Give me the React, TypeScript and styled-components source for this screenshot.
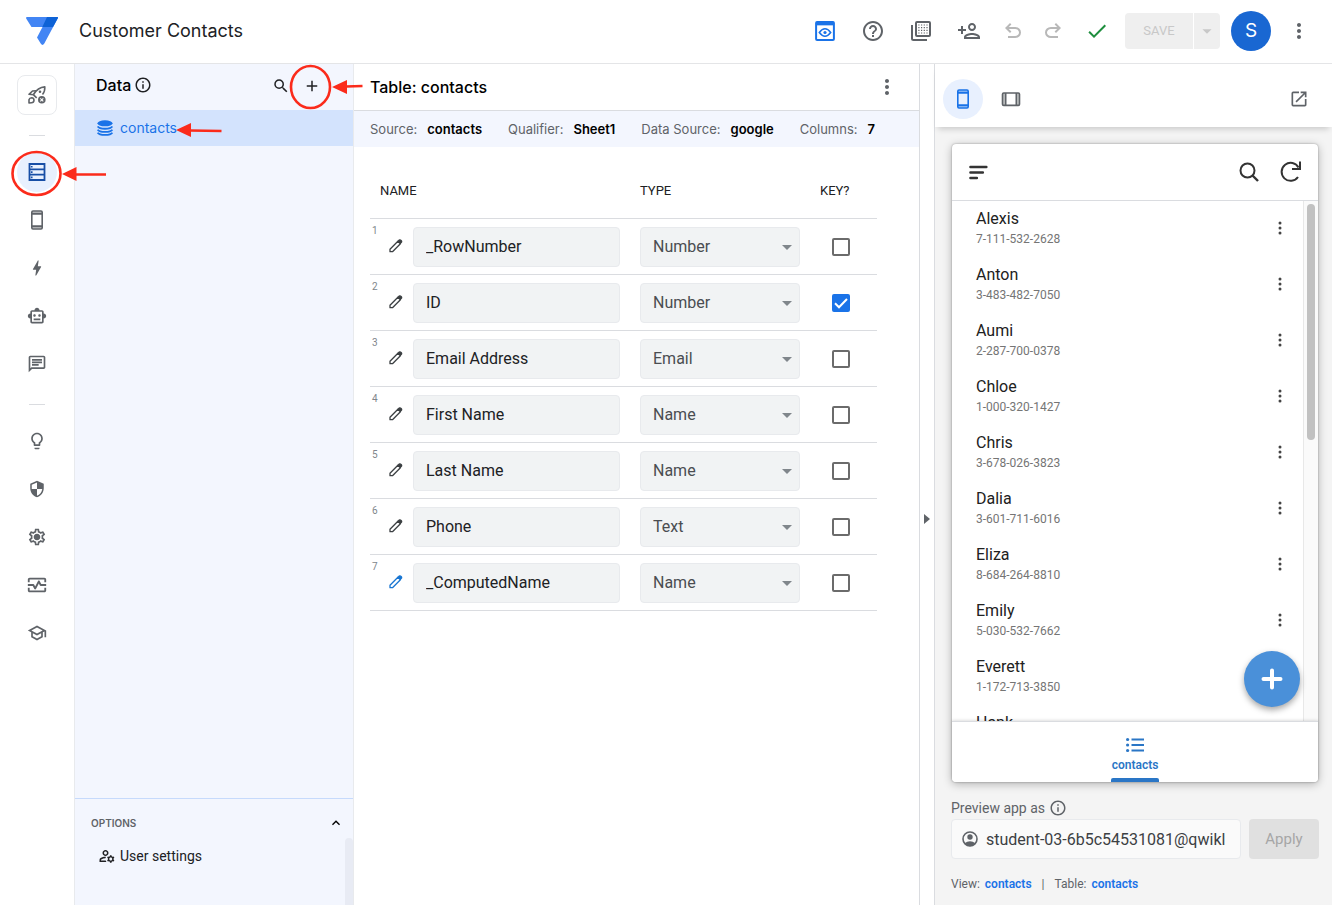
import React from "react";
import styled, { createGlobalStyle } from "styled-components";
import {
  MdHelpOutline, MdOutlinePersonAdd, MdCheck, MdMoreVert, MdBolt,
  MdOutlineSmartToy, MdOutlineChat, MdLightbulbOutline, MdSecurity, MdOutlineSettings,
  MdOutlineMonitorHeart, MdOutlineSchool, MdOutlineInfo, MdSearch, MdAdd, MdOpenInNew,
  MdOutlineManageAccounts, MdExpandLess, MdArrowDropDown,
} from "react-icons/md";

const body = `Roboto, "Liberation Sans", sans-serif`;
const display = `Inter, "Open Sans", sans-serif`;
const grey = "#5f6368";
const line = "#dadce0";
const blue = "#1a73e8";
const pale = "#f3f6fe";

const GlobalStyle = createGlobalStyle`
  *, *::before, *::after { box-sizing: border-box; }
  body { margin: 0; font-family: ${body}; color: #202124; background: #fff; }
  button, input, select { font: inherit; color: inherit; margin: 0; }
  button { background: none; border: 0; padding: 0; cursor: pointer; }
  ul { list-style: none; margin: 0; padding: 0; }
  h1, h2, h3 { margin: 0; font-weight: 500; }
  a { text-decoration: none; }
  svg { display: block; flex: none; }
`;

const Shell = styled.div`
  position: relative;
  display: flex;
  flex-direction: column;
  height: 100vh;
  overflow: hidden;
`;

const TopBar = styled.header`
  display: flex;
  align-items: center;
  height: 64px;
  flex: none;
  padding: 0 21px 2px 26px;
  border-bottom: 1px solid #e4e5e7;
`;
const AppTitle = styled.h1`
  flex: 1;
  margin-left: 21px;
  font: 400 18px/24px ${display};
`;
const Tools = styled.div<{ $gap: number; $after?: number }>`
  display: flex;
  align-items: center;
  gap: ${(p) => p.$gap}px;
  margin-right: ${(p) => p.$after ?? 0}px;
`;
const IconButton = styled.button<{ $size?: number; $color?: string }>`
  display: grid;
  place-items: center;
  width: ${(p) => p.$size ?? 24}px;
  height: ${(p) => p.$size ?? 24}px;
  color: ${(p) => p.$color ?? grey};
  border-radius: 50%;
`;
const SaveGroup = styled.div`
  display: flex;
  gap: 1px;
  height: 36px;
  margin: 0 11px 0 16px;
`;
const SaveButton = styled.button<{ $side: "left" | "right" }>`
  display: grid;
  place-items: center;
  width: ${(p) => (p.$side === "left" ? 68 : 26)}px;
  border-radius: ${(p) => (p.$side === "left" ? "4px 0 0 4px" : "0 4px 4px 0")};
  background: #efefef;
  color: #c8c8c8;
  font-size: 13px;
`;
const Avatar = styled.button`
  width: 40px;
  height: 40px;
  margin-right: 16px;
  border-radius: 50%;
  background: #1967d2;
  color: #fff;
  font: 400 19px/40px ${display};
`;

const Workspace = styled.div`
  display: flex;
  flex: 1;
  min-height: 0;
`;

const Rail = styled.nav`
  display: flex;
  flex-direction: column;
  align-items: center;
  gap: 8px;
  width: 74px;
  flex: none;
  padding-top: 11px;
`;
const RailButton = styled.button<{ $kind?: "boxed" | "active" }>`
  display: grid;
  place-items: center;
  width: 40px;
  height: 40px;
  flex: none;
  color: ${(p) => (p.$kind === "active" ? "#174ea6" : grey)};
  background: ${(p) => (p.$kind === "active" ? "#e8f0fe" : "none")};
  border: ${(p) => (p.$kind === "boxed" ? "1px solid #e8eaed" : "0")};
  border-radius: ${(p) => (p.$kind === "boxed" ? "8px" : "50%")};
`;
const RailRule = styled.hr`
  width: 16px;
  height: 1px;
  flex: none;
  margin: 12px 0 8px;
  border: 0;
  background: ${line};
`;

const DataPanel = styled.aside`
  display: flex;
  flex-direction: column;
  width: 280px;
  flex: none;
  background: ${pale};
  border: solid #e8eaed;
  border-width: 0 1px;
`;
const DataHeader = styled.div`
  display: flex;
  align-items: center;
  height: 46px;
  padding: 0 32px 2px 21px;
`;
const TitleGroup = styled.div`
  display: flex;
  align-items: center;
  gap: 3px;
  padding-bottom: 2px;
`;
const PanelTitle = styled.h2`
  font: 500 16px/24px ${display};
  color: #000;
`;
const HeaderActions = styled.div`
  display: flex;
  gap: 13px;
  margin-left: auto;
`;
const DataItem = styled.a`
  display: flex;
  align-items: center;
  gap: 7px;
  height: 36px;
  padding-left: 22px;
  background: #d3e3fd;
  color: ${blue};
  font: 400 14px/20px ${display};
`;
const Options = styled.section`
  margin-top: auto;
  border-top: 1px solid #c6dafc;
`;
const OptionsHeader = styled.button`
  display: flex;
  align-items: center;
  justify-content: space-between;
  width: 100%;
  padding: 16px 9px 7px 16px;
  font: 600 10px/16px ${display};
  color: ${grey};
`;
const OptionsBody = styled.div`
  display: flex;
  justify-content: space-between;
  height: 67px;
`;
const OptionLink = styled.a`
  display: flex;
  align-items: center;
  gap: 4px;
  height: 36px;
  padding-left: 23px;
  color: #202124;
  font-size: 14px;
`;
const OptionsScroll = styled.div`
  width: 8px;
  border-radius: 4px 4px 0 0;
  background: #e8ebf4;
`;

const Main = styled.main`
  flex: 1;
  min-width: 0;
`;
const MainHeader = styled.div`
  display: flex;
  align-items: center;
  justify-content: space-between;
  height: 47px;
  padding: 0 20px 0 16px;
  border-bottom: 1px solid ${line};
`;
const Facts = styled.dl`
  display: flex;
  gap: 26px;
  height: 36px;
  margin: 0;
  padding-left: 16px;
  align-items: center;
  background: ${pale};
  font: 400 13px/20px ${display};
  white-space: nowrap;
`;
const Fact = styled.div`
  display: flex;
  gap: 10px;
  dt { color: ${grey}; }
  dd { margin: 0; color: #000; font-weight: 600; }
`;
const TableWrap = styled.div`
  padding: 16px 42px 0 16px;
`;
const Table = styled.table`
  width: 100%;
  table-layout: fixed;
  border-collapse: separate;
  border-spacing: 0;
  th, td { height: 56px; padding: 0; border-bottom: 1px solid ${line}; }
  th { text-align: left; font-weight: 400; font-size: 13px; }
  th:first-child { padding-left: 10px; }
`;
const NameCell = styled.div`
  display: grid;
  grid-template-columns: 18px 25px 1fr;
  padding-right: 20px;
  align-items: center;
`;
const RowIndex = styled.span`
  align-self: start;
  padding-left: 2px;
  font-size: 10px;
  line-height: 8px;
  color: #80868b;
`;
const NameInput = styled.input`
  width: 100%;
  height: 40px;
  padding: 0 12px;
  border: 1px solid #e8eaed;
  border-radius: 4px;
  background: #f1f3f4;
  font-size: 16px;
`;
const SelectBox = styled.div`
  position: relative;
  margin-right: 20px;
  color: #80868b;
  svg { position: absolute; right: 1px; top: 8px; pointer-events: none; }
`;
const TypeSelect = styled.select`
  display: block;
  appearance: none;
  width: 100%;
  height: 40px;
  padding: 0 12px;
  border: 1px solid #e8eaed;
  border-radius: 4px;
  background: #f1f3f4;
  color: #4a4d51;
  font-size: 16px;
`;
const KeyBox = styled.label`
  position: relative;
  display: block;
  width: 18px;
  height: 18px;
  margin-left: 12px;
  svg { position: absolute; inset: 0; pointer-events: none; }
`;
const KeyInput = styled.input`
  display: block;
  appearance: none;
  width: 18px;
  height: 18px;
  border: 2px solid #6b6b6b;
  border-radius: 2px;
  &:checked { background: ${blue}; border-color: ${blue}; }
`;

const Splitter = styled.button`
  display: flex;
  align-items: center;
  justify-content: center;
  width: 16px;
  flex: none;
  padding-top: 68px;
  border: solid ${line};
  border-width: 0 1px;
`;

const Preview = styled.aside`
  display: flex;
  flex-direction: column;
  width: 397px;
  flex: none;
  background: #f4f4f4;
`;
const PreviewBar = styled.div`
  display: flex;
  align-items: center;
  gap: 8px;
  padding: 15px 13px 8px 8px;
  background: #fff;
  box-shadow: 0 5px 6px -3px rgba(0, 0, 0, 0.18);
`;
const DeviceButton = styled.button<{ $on?: boolean }>`
  display: grid;
  place-items: center;
  width: 40px;
  height: 40px;
  border-radius: 50%;
  color: ${(p) => (p.$on ? blue : grey)};
  background: ${(p) => (p.$on ? "#e8f0fe" : "none")};
  &:last-child { margin-left: auto; }
`;
const Phone = styled.section`
  display: flex;
  flex-direction: column;
  flex: 1;
  min-height: 0;
  margin: 17px 14px 0 17px;
  border-radius: 4px;
  background: #fff;
  box-shadow: 0 0 2px rgba(0, 0, 0, 0.35), 0 2px 10px rgba(0, 0, 0, 0.28);
`;
const PhoneBar = styled.div`
  display: flex;
  align-items: center;
  gap: 18px;
  height: 57px;
  flex: none;
  padding: 0 15px;
  border-bottom: 1px solid ${line};
  button:first-child { margin-right: auto; }
`;
const PhoneBody = styled.div`
  position: relative;
  display: flex;
  flex: 1;
  min-height: 0;
`;
const ContactList = styled.ul`
  flex: 1;
  overflow: hidden;
`;
const Contact = styled.li`
  display: flex;
  align-items: center;
  justify-content: space-between;
  height: 56px;
  padding: 0 11px 2px 24px;
`;
const ContactText = styled.div`
  padding-bottom: 2px;
`;
const ContactName = styled.div`
  font-size: 16px;
  line-height: 24px;
  color: #212121;
`;
const ContactPhone = styled.div`
  font-size: 12px;
  line-height: 16px;
  color: #757575;
`;
const Track = styled.div`
  width: 15px;
  padding: 3px;
  border-left: 1px solid #e8e8e8;
  background: #fafafa;
`;
const Thumb = styled.div`
  height: 46%;
  border-radius: 4px;
  background: #c1c1c1;
`;
const AddButton = styled.button`
  position: absolute;
  right: 18px;
  bottom: 14px;
  display: grid;
  place-items: center;
  width: 56px;
  height: 56px;
  border-radius: 50%;
  color: #fff;
  background: #4a90d9;
  box-shadow: 0 3px 6px rgba(0, 0, 0, 0.35);
`;
const PhoneNav = styled.nav`
  position: relative;
  display: flex;
  justify-content: center;
  border-top: 1px solid ${line};
  border-radius: 0 0 4px 4px;
  background: #fff;
  box-shadow: 0 -1px 3px rgba(0, 0, 0, 0.12);
`;
const NavTab = styled.a`
  display: flex;
  flex-direction: column;
  align-items: center;
  width: 48px;
  padding-top: 11px;
  color: #2a76c6;
  font-weight: 600;
  font-size: 12px;
  line-height: 16px;
  &::after {
    content: "";
    width: 48px;
    height: 4px;
    margin-top: 5px;
    border-radius: 2px 2px 0 0;
    background: #2a76c6;
  }
`;
const PreviewFooter = styled.footer`
  padding: 16px 13px 12px 16px;
`;
const PreviewLabel = styled.label`
  display: flex;
  align-items: center;
  gap: 4px;
  height: 21px;
  padding-bottom: 1px;
  font-size: 14px;
  color: ${grey};
`;
const ApplyRow = styled.form`
  display: flex;
  gap: 8px;
  height: 40px;
`;
const UserField = styled.div`
  display: flex;
  align-items: center;
  gap: 7px;
  flex: 1;
  min-width: 0;
  padding: 0 12px 0 9px;
  border: 1px solid #e8eaed;
  border-radius: 4px;
  background: #fafafa;
  color: ${grey};
  input {
    flex: 1;
    min-width: 0;
    padding: 0;
    border: 0;
    background: none;
    color: #3c4043;
    font-size: 16px;
  }
`;
const ApplyButton = styled.button`
  width: 70px;
  border-radius: 4px;
  background: #e0e0e0;
  color: #a6a6a6;
  font-size: 15px;
`;
const Links = styled.div`
  display: flex;
  gap: 5px;
  margin-top: 16px;
  font-size: 12px;
  line-height: 18px;
  color: ${grey};
  a { color: ${blue}; font-weight: 600; }
  i { margin: 0 5px; font-style: normal; }
`;

const Annotations = styled.svg`
  position: absolute;
  left: 0;
  top: 0;
  pointer-events: none;
`;

const Logo = () => (
  <svg width="32" height="28" viewBox="0 0 32 28" aria-hidden="true">
    <path d="M1 0h30q1.600 0 .8 1.300L18.300 26.500q-1.800 2.900-3.600 0L11 20.500 16.500 10H5.500L.3 1.800Q-.4 0 1 0z" fill="#4285f4" />
    <path d="M21 0h10q1.600 0 .8 1.300L27 10H16.300z" fill="#0d62d6" />
  </svg>
);
const PreviewIcon = () => (
  <svg width="24" height="24" viewBox="0 0 24 24" fill="none" stroke="currentColor">
    <rect x="3.100" y="3.100" width="17.800" height="17.800" rx="1" strokeWidth="2" />
    <path d="M3 4.600h18" strokeWidth="3.500" />
    <path d="M6.300 13.500q5.700-7.400 11.400 0-5.700 7.400-11.400 0z" strokeWidth="1.500" />
    <circle cx="12" cy="13.500" r="1.600" fill="currentColor" stroke="none" />
  </svg>
);
const TemplateIcon = () => (
  <svg width="24" height="24" viewBox="0 0 24 24" fill="none" stroke="currentColor" strokeWidth="2">
    <path d="M3 6v13.500Q3 21 4.500 21H18" />
    <rect x="7" y="3" width="14" height="14" rx="1" />
    {[6, 8.700, 11.300, 14].map((y) => (
      <path key={y} d={`M9.300 ${y}h9.500`} strokeWidth="1.200" strokeDasharray="1.200 1.500" />
    ))}
  </svg>
);
const UndoIcon = () => (
  <svg width="24" height="24" viewBox="0 -960 960 960" fill="currentColor">
    <path d="M280-200v-80h284q63 0 109.500-40T720-420q0-60-46.500-100T564-560H312l104 104-56 56-200-200 200-200 56 56-104 104h252q97 0 166.500 63T800-420q0 94-69.500 157T564-200H280Z" />
  </svg>
);
const RedoIcon = () => (
  <svg width="24" height="24" viewBox="0 -960 960 960" fill="currentColor">
    <path d="M396-200q-97 0-166.500-63T160-420q0-94 69.500-157T396-640h252L544-744l56-56 200 200-200 200-56-56 104-104H396q-63 0-109.500 40T240-420q0 60 46.500 100T396-280h284v80H396Z" />
  </svg>
);
const RocketIcon = () => (
  <svg width="20" height="20" viewBox="0 0 20 20" fill="none" stroke="currentColor" strokeWidth="1.600" strokeLinejoin="round">
    <path d="M6.500 9.500C9.500 4.500 12.800 2.200 17.800 1.900c.2 3.200-.4 5.600-2.300 7.600" />
    <path d="M9 5.800 5.500 6 2 9.300l4.500.5 3.200 3" />
    <circle cx="13" cy="6.700" r="1.300" fill="currentColor" stroke="none" />
    <path d="M2 18v-3.300q.5-2 2.700-2 2.300.3 2.300 2.500-.2 2.500-2.500 2.600z" />
    <circle cx="14.800" cy="14.800" r="3.800" fill="currentColor" stroke="none" />
    <path d="m13.300 13.300 3 3m0-3-3 3" stroke="#fff" strokeWidth="1.100" />
  </svg>
);
const TableIcon = () => (
  <svg width="18" height="18" viewBox="0 0 18 18" fill="none" stroke="currentColor" strokeWidth="1.800">
    <path d="M1.500 1h15v16h-15zM1.500 6.300h15M1.500 11.700h15" />
    <path d="M3.700 2.900v1.700M3.700 8.200v1.700M3.700 13.500v1.700" strokeWidth="1.700" />
  </svg>
);
const PhoneIcon = () => (
  <svg width="20" height="20" viewBox="0 0 20 20" fill="none" stroke="currentColor" strokeWidth="1.600">
    <rect x="4.800" y="1" width="10.400" height="18" rx="1.200" />
    <path d="M5 3.900h10M5 16.100h10" />
    <path d="M5 2.400h10M5 17.600h10" opacity=".5" />
  </svg>
);
const TabletIcon = () => (
  <svg width="20" height="20" viewBox="0 0 20 20" fill="none" stroke="currentColor" strokeWidth="1.600">
    <rect x="1.500" y="4" width="17" height="12.400" rx="1.200" />
    <path d="M4.700 4v12M15.300 4v12" />
    <path d="M3 4v12M17 4v12" opacity=".5" />
  </svg>
);
const GearIcon = () => (
  <svg width="20" height="20" viewBox="0 0 24 24" fill="currentColor">
    <MdOutlineSettings size={24} />
    <circle cx="12" cy="12" r="3.200" />
  </svg>
);
const DatabaseIcon = () => (
  <svg width="16" height="16" viewBox="0 0 16 16" fill="none" stroke="currentColor" strokeWidth="1.800">
    <ellipse cx="8" cy="3.300" rx="7.500" ry="3" fill="currentColor" stroke="none" />
    <path d="M.7 6.500c1.500 3 13.100 3 14.600 0M.7 9.600c1.500 3 13.100 3 14.600 0M.7 12.700c1.500 3 13.100 3 14.600 0" />
  </svg>
);
const PencilIcon = () => (
  <svg width="16" height="16" viewBox="0 0 16 16" fill="none" stroke="currentColor" strokeWidth="1.300" strokeLinejoin="round">
    <path d="M2 12.700v-2.500l7.900-7.900 2.500 2.500-7.900 7.900z" />
    <path d="m10.100 2.100 1-1q1-.7 2 .3t.2 2l-.9 1z" fill="currentColor" />
  </svg>
);
const MenuIcon = () => (
  <svg width="24" height="24" viewBox="0 0 24 24" stroke="currentColor" strokeWidth="2.400" strokeLinecap="round">
    <path d="M3.400 7h16M3.400 12.500h12.500M3.400 18h6.500" />
  </svg>
);
const FindIcon = () => (
  <svg width="24" height="24" viewBox="0 0 24 24" fill="none" stroke="currentColor" strokeWidth="2">
    <circle cx="10.500" cy="10.500" r="7" />
    <path d="m15.500 15.500 5.500 5.500" strokeWidth="2.400" />
  </svg>
);
const RefreshIcon = () => (
  <svg width="24" height="24" viewBox="0 0 24 24" fill="none" stroke="currentColor" strokeWidth="2">
    <path d="M19.500 7.500A9 9 0 1 0 19 17" />
    <path d="M21 1.500V9h-8" />
  </svg>
);
const ListIcon = () => (
  <svg width="24" height="24" viewBox="0 0 24 24" fill="none" stroke="currentColor" strokeWidth="2">
    <path d="M8.500 6.500H21M8.500 12H21M8.500 17.500H21" />
    {[6.500, 12, 17.500].map((y) => (
      <circle key={y} cx="4.600" cy={y} r="1.600" fill="currentColor" stroke="none" />
    ))}
  </svg>
);
const AccountIcon = () => (
  <svg width="18" height="18" viewBox="0 0 18 18" fill="none" stroke="currentColor" strokeWidth="1.600">
    <circle cx="9" cy="9" r="7" />
    <circle cx="9" cy="7" r="2.700" fill="currentColor" stroke="none" />
    <path d="M3.500 13.300q5.500-4 11 0-2.300 2.900-5.500 2.900t-5.500-2.900z" fill="currentColor" stroke="none" />
  </svg>
);
const Dots = () => (
  <svg width="24" height="24" viewBox="0 0 24 24" fill="#444">
    {[7, 12, 17].map((y) => <circle key={y} cx="12" cy={y} r="1.500" />)}
  </svg>
);

const fields = [
  { name: "_RowNumber", type: "Number", key: false },
  { name: "ID", type: "Number", key: true },
  { name: "Email Address", type: "Email", key: false },
  { name: "First Name", type: "Name", key: false },
  { name: "Last Name", type: "Name", key: false },
  { name: "Phone", type: "Text", key: false },
  { name: "_ComputedName", type: "Name", key: false },
];
const types = ["Number", "Email", "Name", "Text"];
const facts = [
  ["Source:", "contacts"],
  ["Qualifier:", "Sheet1"],
  ["Data Source:", "google"],
  ["Columns:", "7"],
];
const contacts = [
  ["Alexis", "7-111-532-2628"],
  ["Anton", "3-483-482-7050"],
  ["Aumi", "2-287-700-0378"],
  ["Chloe", "1-000-320-1427"],
  ["Chris", "3-678-026-3823"],
  ["Dalia", "3-601-711-6016"],
  ["Eliza", "8-684-264-8810"],
  ["Emily", "5-030-532-7662"],
  ["Everett", "1-172-713-3850"],
  ["Hank", ""],
];

function FieldRow({ index, name, type, initialKey }: { index: number; name: string; type: string; initialKey: boolean }) {
  const [isKey, setIsKey] = React.useState(initialKey);
  return (
    <tr>
      <td>
        <NameCell>
          <RowIndex>{index}</RowIndex>
          <IconButton $size={16} $color={name === "_ComputedName" ? "#1976d2" : "#3c4043"} aria-label={`Edit ${name}`}>
            <PencilIcon />
          </IconButton>
          <NameInput aria-label={`Column ${index} name`} defaultValue={name} />
        </NameCell>
      </td>
      <td>
        <SelectBox>
          <TypeSelect aria-label={`${name} type`} defaultValue={type}>
            {types.map((t) => <option key={t}>{t}</option>)}
          </TypeSelect>
          <MdArrowDropDown size={24} />
        </SelectBox>
      </td>
      <td>
        <KeyBox>
          <KeyInput type="checkbox" aria-label={`${name} is key`} checked={isKey} onChange={(e) => setIsKey(e.target.checked)} />
          {isKey && (
            <svg width="18" height="18" viewBox="0 0 18 18" fill="none" stroke="#fff" strokeWidth="2">
              <path d="m3 9.300 4 4L15 5" />
            </svg>
          )}
        </KeyBox>
      </td>
    </tr>
  );
}

export default function App() {
  return (
    <Shell>
      <GlobalStyle />
      <TopBar>
        <Logo />
        <AppTitle>Customer Contacts</AppTitle>
        <Tools $gap={24} $after={20}>
          <IconButton $color={blue} aria-label="Preview"><PreviewIcon /></IconButton>
          <IconButton aria-label="Help"><MdHelpOutline size={24} /></IconButton>
          <IconButton aria-label="Templates"><TemplateIcon /></IconButton>
          <IconButton aria-label="Share"><MdOutlinePersonAdd size={24} /></IconButton>
        </Tools>
        <Tools $gap={16} $after={20}>
          <IconButton $color="#b8b8b8" aria-label="Undo"><UndoIcon /></IconButton>
          <IconButton $color="#b8b8b8" aria-label="Redo"><RedoIcon /></IconButton>
        </Tools>
        <MdCheck size={24} color="#1e8e3e" />
        <SaveGroup>
          <SaveButton $side="left">SAVE</SaveButton>
          <SaveButton $side="right" aria-label="Save options"><MdArrowDropDown size={22} /></SaveButton>
        </SaveGroup>
        <Avatar>S</Avatar>
        <IconButton aria-label="More"><MdMoreVert size={24} /></IconButton>
      </TopBar>

      <Workspace>
        <Rail aria-label="Editor sections">
          <RailButton $kind="boxed" aria-label="Deploy"><RocketIcon /></RailButton>
          <RailRule />
          <RailButton $kind="active" aria-label="Data"><TableIcon /></RailButton>
          <RailButton aria-label="Views"><PhoneIcon /></RailButton>
          <RailButton aria-label="Actions"><MdBolt size={20} /></RailButton>
          <RailButton aria-label="Automation"><MdOutlineSmartToy size={20} /></RailButton>
          <RailButton aria-label="Chat"><MdOutlineChat size={20} /></RailButton>
          <RailRule />
          <RailButton aria-label="Intelligence"><MdLightbulbOutline size={20} /></RailButton>
          <RailButton aria-label="Security"><MdSecurity size={18} /></RailButton>
          <RailButton aria-label="Settings"><GearIcon /></RailButton>
          <RailButton aria-label="Manage"><MdOutlineMonitorHeart size={22} /></RailButton>
          <RailButton aria-label="Learn"><MdOutlineSchool size={20} /></RailButton>
        </Rail>

        <DataPanel>
          <DataHeader>
            <TitleGroup>
              <PanelTitle>Data</PanelTitle>
              <IconButton $size={18} $color="#202124" aria-label="About data"><MdOutlineInfo size={18} /></IconButton>
            </TitleGroup>
            <HeaderActions>
              <IconButton $size={18} $color="#202124" aria-label="Search"><MdSearch size={18} /></IconButton>
              <IconButton $size={18} $color="#202124" aria-label="Add data"><MdAdd size={18} /></IconButton>
            </HeaderActions>
          </DataHeader>
          <DataItem href="#contacts"><DatabaseIcon />contacts</DataItem>
          <Options>
            <OptionsHeader>OPTIONS<MdExpandLess size={16} color="#000" /></OptionsHeader>
            <OptionsBody>
              <OptionLink href="#settings"><MdOutlineManageAccounts size={18} />User settings</OptionLink>
              <OptionsScroll />
            </OptionsBody>
          </Options>
        </DataPanel>

        <Main>
          <MainHeader>
            <PanelTitle>Table: contacts</PanelTitle>
            <IconButton aria-label="Table options"><MdMoreVert size={24} /></IconButton>
          </MainHeader>
          <Facts>
            {facts.map(([k, v]) => <Fact key={k}><dt>{k}</dt><dd>{v}</dd></Fact>)}
          </Facts>
          <TableWrap>
            <Table>
              <colgroup><col /><col width="180" /><col width="57" /></colgroup>
              <thead><tr><th>NAME</th><th>TYPE</th><th>KEY?</th></tr></thead>
              <tbody>
                {fields.map((f, i) => <FieldRow key={f.name} index={i + 1} name={f.name} type={f.type} initialKey={f.key} />)}
              </tbody>
            </Table>
          </TableWrap>
        </Main>

        <Splitter aria-label="Collapse preview">
          <svg width="6" height="10" viewBox="0 0 6 10" fill={grey}><path d="M0 0l6 5-6 5z" /></svg>
        </Splitter>

        <Preview>
          <PreviewBar>
            <DeviceButton $on aria-label="Phone preview"><PhoneIcon /></DeviceButton>
            <DeviceButton aria-label="Tablet preview"><TabletIcon /></DeviceButton>
            <DeviceButton aria-label="Open in new tab"><MdOpenInNew size={20} /></DeviceButton>
          </PreviewBar>
          <Phone>
            <PhoneBar>
              <IconButton $color="#333" aria-label="Menu"><MenuIcon /></IconButton>
              <IconButton $color="#333" aria-label="Search contacts"><FindIcon /></IconButton>
              <IconButton $color="#333" aria-label="Sync"><RefreshIcon /></IconButton>
            </PhoneBar>
            <PhoneBody>
              <ContactList>
                {contacts.map(([name, phone]) => (
                  <Contact key={name}>
                    <ContactText>
                      <ContactName>{name}</ContactName>
                      <ContactPhone>{phone || "\u00a0"}</ContactPhone>
                    </ContactText>
                    {name !== "Everett" && name !== "Hank" && (
                      <IconButton aria-label={`${name} options`}><Dots /></IconButton>
                    )}
                  </Contact>
                ))}
              </ContactList>
              <Track><Thumb /></Track>
              <AddButton aria-label="Add contact">
                <svg width="22" height="22" viewBox="0 0 22 22" stroke="currentColor" strokeWidth="4" strokeLinecap="round">
                  <path d="M11 2.500v17M2.500 11h17" />
                </svg>
              </AddButton>
            </PhoneBody>
            <PhoneNav>
              <NavTab href="#contacts"><ListIcon />contacts</NavTab>
            </PhoneNav>
          </Phone>
          <PreviewFooter>
            <PreviewLabel htmlFor="preview-user">Preview app as <MdOutlineInfo size={18} /></PreviewLabel>
            <ApplyRow onSubmit={(e) => e.preventDefault()}>
              <UserField>
                <AccountIcon />
                <input id="preview-user" defaultValue="student-03-6b5c54531081@qwikl" />
              </UserField>
              <ApplyButton type="submit">Apply</ApplyButton>
            </ApplyRow>
            <Links>
              <span>View:</span><a href="#view">contacts</a>
              <i>|</i>
              <span>Table:</span><a href="#table">contacts</a>
            </Links>
          </PreviewFooter>
        </Preview>
      </Workspace>

      <Annotations width="370" height="200" viewBox="0 0 370 200" fill="none" stroke="#fb2b1b" strokeWidth="2.600" aria-hidden="true">
        <ellipse cx="310.500" cy="87" rx="19.500" ry="21" />
        <ellipse cx="36.500" cy="173.500" rx="24" ry="21.500" />
        <path d="M346 86.500l16.500-.5M190 130.500l31.500.5M75 174.500h31" />
        <path d="M332 87l15-7v14zM176 130l15-7v14zM62 174l14.500-7v14z" fill="#fb2b1b" stroke="none" />
      </Annotations>
    </Shell>
  );
}
